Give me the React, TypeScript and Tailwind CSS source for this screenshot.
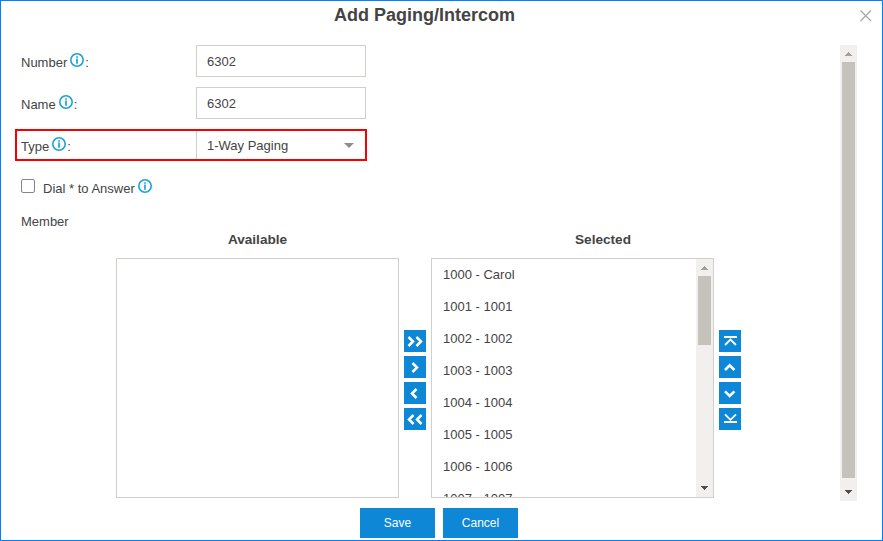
import type { ReactNode } from "react";

function InfoIcon() {
  return (
    <svg viewBox="0 0 14 14" className="size-[14px] shrink-0" fill="none">
      <circle cx="7" cy="7" r="6.2" stroke="#1ba3d3" strokeWidth="1.6" />
      <path d="M7 3.2v1.5M7 5.5v5.2" stroke="#1ba3d3" strokeWidth="1.7" />
    </svg>
  );
}

function Label({ text }: { text: string }) {
  return (
    <div className="flex w-[175px] shrink-0 items-start pt-2">
      <span className="pt-[2px] leading-[15px]">{text}</span>
      <span className="ml-[3px]">
        <InfoIcon />
      </span>
      <span className="ml-px pt-[2px] leading-[15px]">:</span>
    </div>
  );
}

function Field({ label, value }: { label: string; value: string }) {
  return (
    <div className="mb-[10px] ml-[20px] flex h-8">
      <Label text={label} />
      <input
        readOnly
        value={value}
        className="h-8 w-[170px] border border-[#d0d0ca] bg-white px-[10px] outline-none"
      />
    </div>
  );
}

function Scrollbar({ thumb }: { thumb: string }) {
  return (
    <div className="flex w-[17px] shrink-0 flex-col items-center bg-[#f1f0ee]">
      <svg viewBox="0 0 17 17" className="size-[17px] shrink-0" shapeRendering="crispEdges">
        <path d="M8 7h1v1h1v1h1v1h1v1H5v-1h1V9h1V8h1z" fill="#a3a19b" />
      </svg>
      <div className={`w-[13px] bg-[#c5c2bb] ${thumb}`} />
      <svg viewBox="0 0 17 17" className="mt-auto size-[17px] shrink-0" shapeRendering="crispEdges">
        <path d="M5 6h7v1h-1v1h-1v1H9v1H8V9H7V8H6V7H5z" fill="#505050" />
      </svg>
    </div>
  );
}

function IconButton({ label, children }: { label: string; children: ReactNode }) {
  return (
    <button aria-label={label} className="size-[22px] bg-[#0d87d6]">
      <svg viewBox="0 0 22 22" className="size-[22px]" fill="none" stroke="white" strokeWidth="2.5">
        {children}
      </svg>
    </button>
  );
}

const members = [
  "1000 - Carol",
  "1001 - 1001",
  "1002 - 1002",
  "1003 - 1003",
  "1004 - 1004",
  "1005 - 1005",
  "1006 - 1006",
  "1007 - 1007",
];

export default function App() {
  return (
    <div className="flex h-[541px] w-[883px] flex-col overflow-hidden border border-[#0080ff] bg-white font-['Liberation_Sans',Arial,sans-serif] text-[13px] text-[#444]">
      <header className="flex h-11 shrink-0 items-start">
        <h1 className="flex-1 pt-1 pr-[12px] text-center text-[18px] leading-5 font-bold">
          Add Paging/Intercom
        </h1>
        <button aria-label="Close" className="mt-[9px] mr-[10px]">
          <svg viewBox="0 0 12 12" className="size-3" fill="none" stroke="#a5a5a5" strokeWidth="1.1">
            <path d="M.5 .5l10.5 10.5M11 .5L.5 11" />
          </svg>
        </button>
      </header>

      <main className="flex h-[456px] w-[856px] shrink-0">
        <div className="min-w-0 flex-1">
          <Field label="Number" value="6302" />
          <Field label="Name" value="6302" />
          <div className="ml-[14px] flex h-8 w-[352px] border-2 border-[#f80000] pl-1">
            <div className="-mt-[2px]">
              <Label text="Type" />
            </div>
            <div className="flex flex-1 items-center justify-between border-l border-[#d0d0ca] pr-[11px] pl-[10px]">
              <span className="pt-px">1-Way Paging</span>
              <svg viewBox="0 0 10 5" className="h-[5px] w-[10px]">
                <path d="M0 0h10L5 5z" fill="#908e89" />
              </svg>
            </div>
          </div>

          <div className="mt-[18px] ml-[20px] flex items-start">
            <span className="size-[14px] rounded-[2px] border-[1.5px] border-[#858585] bg-white" />
            <span className="ml-2 pt-[2px] leading-[15px]">Dial * to Answer</span>
            <span className="ml-[3px]">
              <InfoIcon />
            </span>
          </div>

          <div className="mt-[18px] ml-[20px] leading-[15px]">Member</div>

          <div className="mt-[3px] ml-[115px] flex">
            <section className="w-[283px]">
              <h2 className="pb-[11px] text-center text-[13.6px] leading-[15px] font-bold">Available</h2>
              <div className="h-[240px] border border-[#d0d0ca]" />
            </section>
            <div className="mx-[5px] mt-[98px] flex flex-col gap-1">
              <IconButton label="Add all">
                <path d="M4.5 7L9 11.5 4.5 16M12.5 7l4.5 4.5-4.5 4.5" />
              </IconButton>
              <IconButton label="Add">
                <path d="M8.5 7l4.5 4.5L8.5 16" />
              </IconButton>
              <IconButton label="Remove">
                <path d="M12.5 7L8 11.5l4.5 4.5" />
              </IconButton>
              <IconButton label="Remove all">
                <path d="M9.5 7L5 11.5 9.5 16M17.5 7L13 11.5l4.5 4.5" />
              </IconButton>
            </div>
            <section className="w-[283px]">
              <h2 className="pl-[61px] text-center text-[13.6px] leading-[15px] font-bold">Selected</h2>
              <div className="mt-[11px] flex h-[240px] overflow-hidden border border-[#d0d0ca]">
                <ul className="flex-1">
                  {members.map((m) => (
                    <li key={m} className="h-8 pl-[11px] leading-[31px]">
                      {m}
                    </li>
                  ))}
                </ul>
                <Scrollbar thumb="h-[69px]" />
              </div>
            </section>
            <div className="mt-[98px] ml-[5px] flex flex-col gap-1">
              <IconButton label="Move to top">
                <path d="M5 7h13" strokeWidth="2" />
                <path d="M6 15l5.5-5.5L17 15" strokeWidth="1.8" />
              </IconButton>
              <IconButton label="Move up">
                <path d="M6 14l4.7-4.7 4.7 4.7" />
              </IconButton>
              <IconButton label="Move down">
                <path d="M6 9.3l4.7 4.7L15.4 9.3" />
              </IconButton>
              <IconButton label="Move to bottom">
                <path d="M6 6.3l5.5 5.5L17 6.3" strokeWidth="1.8" />
                <path d="M5 14h13" strokeWidth="2" />
              </IconButton>
            </div>
          </div>
        </div>
        <Scrollbar thumb="h-[416px]" />
      </main>

      <footer className="mt-[7px] ml-[359px] flex gap-2 text-[12px] text-white">
        <button className="h-[30px] w-[75px] bg-[#0d87d6]">Save</button>
        <button className="h-[30px] w-[75px] bg-[#0d87d6]">Cancel</button>
      </footer>
    </div>
  );
}
